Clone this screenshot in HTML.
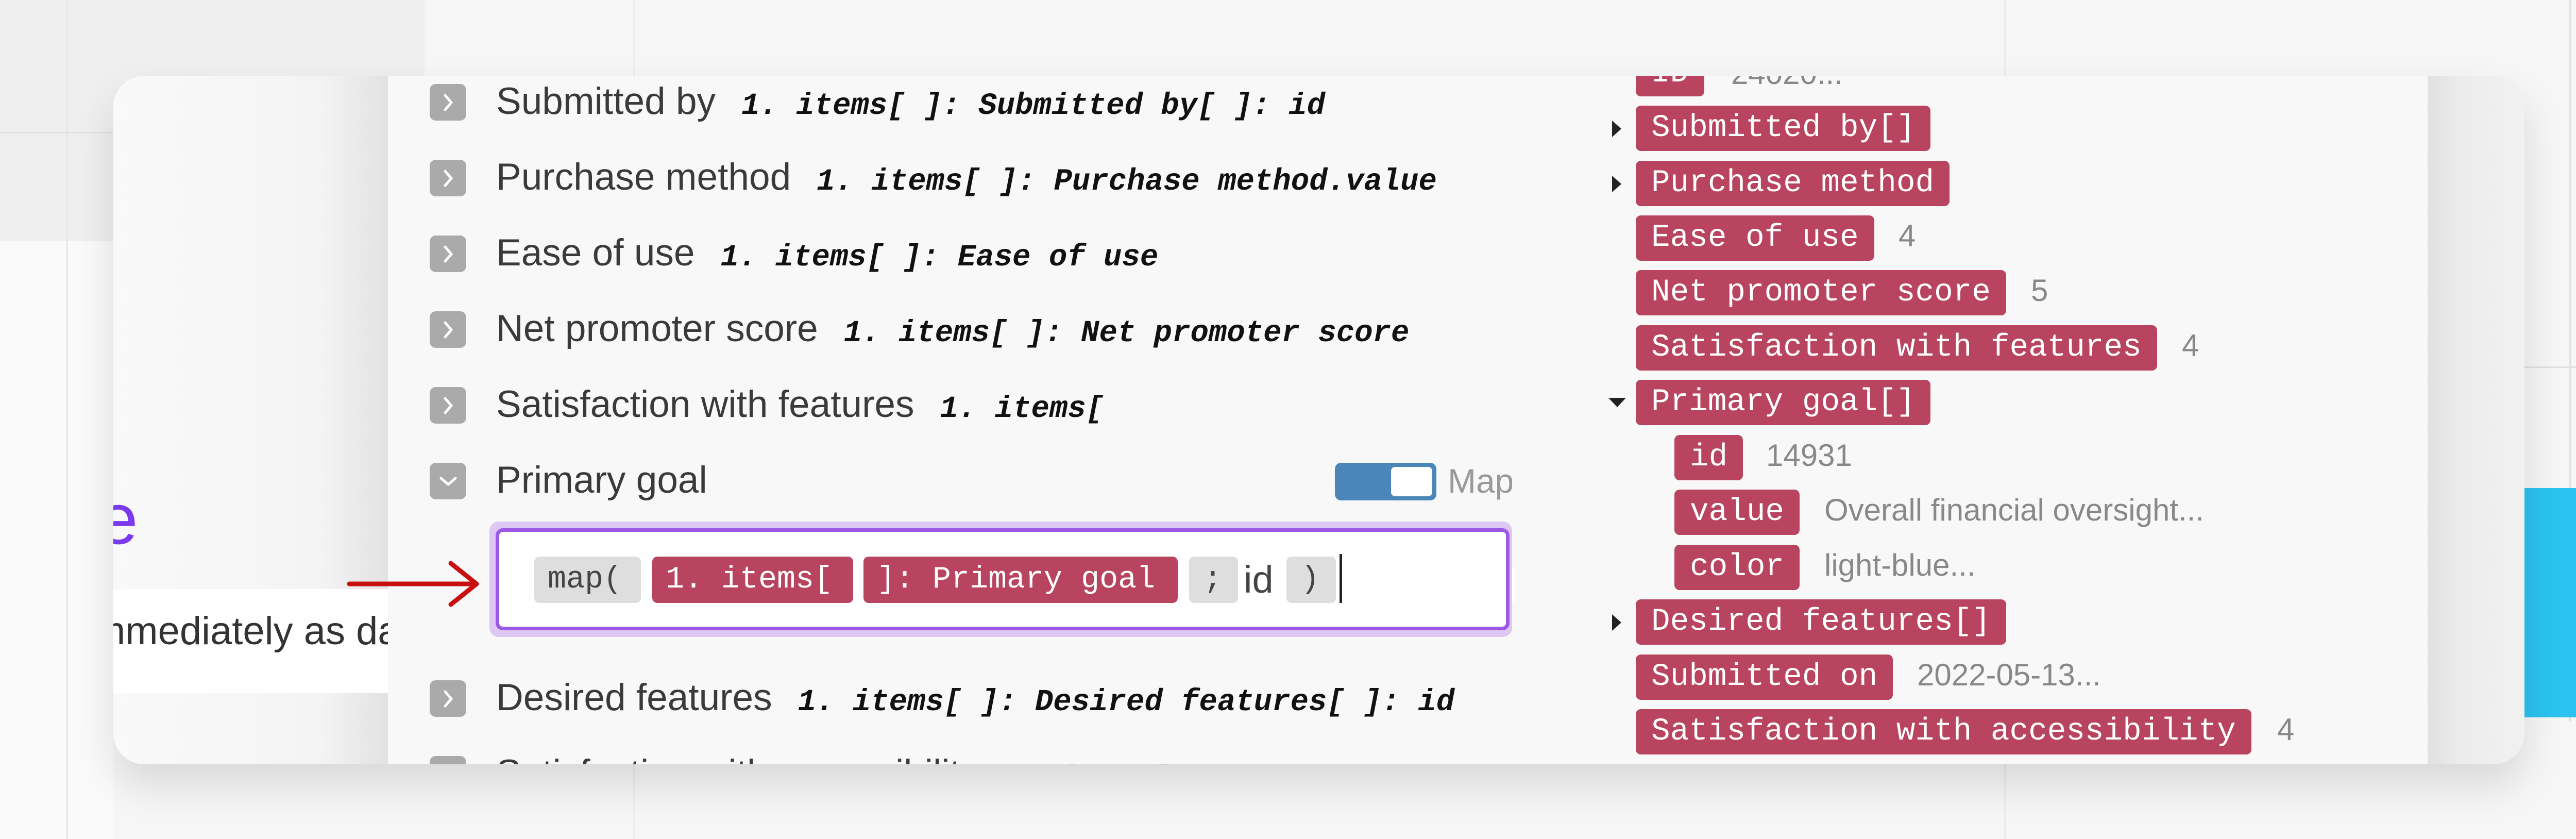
<!DOCTYPE html>
<html><head><meta charset="utf-8"><style>
*{margin:0;padding:0;box-sizing:border-box}
body{width:5120px;height:1628px;position:relative;overflow:hidden;background:#f6f6f6;font-family:"Liberation Sans",sans-serif}
.a{position:absolute}
.icon{position:absolute;left:834px;width:71px;height:71px;background:#aaa;border-radius:12px}
.icon svg{position:absolute;left:0;top:0}
.lbl{position:absolute;left:963px;font-size:73px;color:#3a3a3a;white-space:nowrap;line-height:1}
.code{font-family:"Liberation Mono",monospace;font-weight:bold;font-style:italic;font-size:59px;color:#111;margin-left:50px}
.tag{position:absolute;height:88px;line-height:88px;background:#b8445f;color:#fff;font-family:"Liberation Mono",monospace;font-size:61px;padding:0 30px;border-radius:10px;white-space:nowrap}
.val{position:absolute;font-size:60px;color:#888;line-height:88px;white-space:nowrap}
.chip{position:absolute;top:1080px;height:90px;line-height:90px;font-family:"Liberation Mono",monospace;font-size:60px;border-radius:10px;padding:0 26px;white-space:nowrap}
.g{background:#dedede;color:#444}.r{background:#b8445f;color:#fff}
</style></head><body>
<div class="a" style="left:0;top:0;width:824px;height:468px;background:#efefef"></div>
<div class="a" style="left:0;top:468px;width:220px;height:1160px;background:#fafafa"></div>
<div class="a" style="left:129px;top:0;width:3px;height:1628px;background:#e4e6e8"></div>
<div class="a" style="left:0;top:256px;width:220px;height:3px;background:#e0e3e6"></div>
<div class="a" style="left:1229px;top:0;width:3px;height:1628px;background:#ececec"></div>
<div class="a" style="left:3890px;top:0;width:3px;height:1628px;background:#ececec"></div>
<div class="a" style="left:4987px;top:0;width:4px;height:1400px;background:#dfe0e2"></div>
<div class="a" style="left:4900px;top:711px;width:220px;height:3px;background:#dfe0e2"></div>
<div class="a" style="left:4850px;top:947px;width:242px;height:445px;background:#2bc3f0;border-radius:0 45px 45px 0"></div>
<div class="a" style="left:220px;top:147px;width:4680px;height:1336px;border-radius:60px;overflow:hidden;box-shadow:0 40px 80px rgba(0,0,0,0.12);background:linear-gradient(90deg,#f9f9f9 0,#f4f4f4 400px,#e2e2e2 533px)">
  <div class="a" style="left:0;top:996px;width:533px;height:202px;background:#fff"></div>
  <div class="a" style="left:0;top:1040px;font-size:76px;color:#333;white-space:nowrap;margin-left:-40px;line-height:1">mmediately as da</div>
  <div class="a" style="left:-30px;top:790px;font-size:140px;color:#7c3aed;line-height:1">e</div>
  <div class="a" style="left:4492px;top:0;width:188px;height:1336px;background:linear-gradient(90deg,#e0e0e0,#ececec 60px,#f1f1f1)"></div>
</div>
<div class="a" style="left:753px;top:147px;width:2182px;height:1336px;background:#f8f8f8;overflow:hidden">
 <div style="position:absolute;left:-753px;top:-147px;width:5120px;height:1628px">
  <div class="icon" style="top:163px"><svg width="71" height="71"><path d="M30 22 L42 36 L30 50" stroke="#fff" stroke-width="5" fill="none" stroke-linecap="round"/></svg></div>
  <div class="lbl" style="top:160px">Submitted by<span class="code">1. items[ ]: Submitted by[ ]: id</span></div>
  <div class="icon" style="top:310px"><svg width="71" height="71"><path d="M30 22 L42 36 L30 50" stroke="#fff" stroke-width="5" fill="none" stroke-linecap="round"/></svg></div>
  <div class="lbl" style="top:307px">Purchase method<span class="code">1. items[ ]: Purchase method.value</span></div>
  <div class="icon" style="top:457px"><svg width="71" height="71"><path d="M30 22 L42 36 L30 50" stroke="#fff" stroke-width="5" fill="none" stroke-linecap="round"/></svg></div>
  <div class="lbl" style="top:454px">Ease of use<span class="code">1. items[ ]: Ease of use</span></div>
  <div class="icon" style="top:604px"><svg width="71" height="71"><path d="M30 22 L42 36 L30 50" stroke="#fff" stroke-width="5" fill="none" stroke-linecap="round"/></svg></div>
  <div class="lbl" style="top:601px">Net promoter score<span class="code">1. items[ ]: Net promoter score</span></div>
  <div class="icon" style="top:751px"><svg width="71" height="71"><path d="M30 22 L42 36 L30 50" stroke="#fff" stroke-width="5" fill="none" stroke-linecap="round"/></svg></div>
  <div class="lbl" style="top:748px">Satisfaction with features<span class="code">1. items[</span></div>
  <div class="icon" style="top:898px"><svg width="71" height="71"><path d="M22 30 L36 42 L50 30" stroke="#fff" stroke-width="5" fill="none" stroke-linecap="round"/></svg></div>
  <div class="lbl" style="top:895px">Primary goal</div>
  <div class="a" style="left:2591px;top:898px;width:197px;height:73px;background:#4a87b8;border-radius:12px"><div class="a" style="right:8px;top:8px;width:80px;height:57px;background:#fff;border-radius:8px"></div></div>
  <div class="a" style="left:2810px;top:900px;font-size:66px;color:#999;line-height:1">Map</div>
  <div class="a" style="left:950px;top:1012px;width:1985px;height:224px;background:#dcc8f2;border-radius:18px"></div>
  <div class="a" style="left:962px;top:1025px;width:1968px;height:198px;background:#fff;border:7px solid #9b59e6;border-radius:14px"></div>
  <div class="chip g" style="left:1037px;width:207px">map(</div>
  <div class="chip r" style="left:1266px;width:390px">1. items[</div>
  <div class="chip r" style="left:1676px;width:610px">]: Primary goal</div>
  <div class="chip g" style="left:2308px;width:95px;padding:0 28px">;</div>
  <div class="a" style="left:2414px;top:1085px;font-size:74px;color:#444;line-height:80px">id</div>
  <div class="chip g" style="left:2497px;width:96px;padding:0 28px">)</div>
  <div class="a" style="left:2600px;top:1075px;width:5px;height:95px;background:#222"></div>
  <div class="icon" style="top:1320px"><svg width="71" height="71"><path d="M30 22 L42 36 L30 50" stroke="#fff" stroke-width="5" fill="none" stroke-linecap="round"/></svg></div>
  <div class="lbl" style="top:1317px">Desired features<span class="code">1. items[ ]: Desired features[ ]: id</span></div>
  <div class="icon" style="top:1467px"></div>
  <div class="lbl" style="top:1464px">Satisfaction with accessibility<span class="code">1. items[</span></div>
 </div>
</div>
<svg class="a" style="left:670px;top:1085px" width="270" height="100"><path d="M8 48 H250 M205 8 L255 48 L205 88" stroke="#c81010" stroke-width="9" fill="none" stroke-linecap="round" stroke-linejoin="round"/></svg>
<div class="a" style="left:2935px;top:147px;width:1777px;height:1336px;background:#f8f8f8;overflow:hidden">
 <div style="position:absolute;left:-2935px;top:-147px;width:5120px;height:1628px">
  <svg class="a" style="left:2890px;top:1090px" width="50" height="90"><path d="M50 10 L12 45 L50 80 Z" fill="#fff"/></svg>
  <div class="tag" style="left:3175px;top:99px">ID</div><div class="val" style="left:3360px;top:99px">24020...</div>
  <svg class="a" style="left:3127px;top:230px" width="24" height="40"><path d="M2 4 L20 20 L2 36Z" fill="#222"/></svg>
  <div class="tag" style="left:3175px;top:205px">Submitted by[]</div>
  <svg class="a" style="left:3127px;top:337px" width="24" height="40"><path d="M2 4 L20 20 L2 36Z" fill="#222"/></svg>
  <div class="tag" style="left:3175px;top:312px">Purchase method</div>
  <div class="tag" style="left:3175px;top:418px">Ease of use</div><div class="val" style="left:3685px;top:414px">4</div>
  <div class="tag" style="left:3175px;top:524px">Net promoter score</div><div class="val" style="left:3942px;top:520px">5</div>
  <div class="tag" style="left:3175px;top:631px">Satisfaction with features</div><div class="val" style="left:4235px;top:627px">4</div>
  <svg class="a" style="left:3120px;top:770px" width="40" height="24"><path d="M2 2 L36 2 L19 20Z" fill="#222"/></svg>
  <div class="tag" style="left:3175px;top:737px">Primary goal[]</div>
  <div class="tag" style="left:3250px;top:844px">id</div><div class="val" style="left:3428px;top:840px">14931</div>
  <div class="tag" style="left:3250px;top:950px">value</div><div class="val" style="left:3541px;top:946px">Overall financial oversight...</div>
  <div class="tag" style="left:3250px;top:1057px">color</div><div class="val" style="left:3541px;top:1053px">light-blue...</div>
  <svg class="a" style="left:3127px;top:1188px" width="24" height="40"><path d="M2 4 L20 20 L2 36Z" fill="#222"/></svg>
  <div class="tag" style="left:3175px;top:1163px">Desired features[]</div>
  <div class="tag" style="left:3175px;top:1270px">Submitted on</div><div class="val" style="left:3721px;top:1266px">2022-05-13...</div>
  <div class="tag" style="left:3175px;top:1376px">Satisfaction with accessibility</div><div class="val" style="left:4420px;top:1372px">4</div>
 </div>
</div>
</body></html>
